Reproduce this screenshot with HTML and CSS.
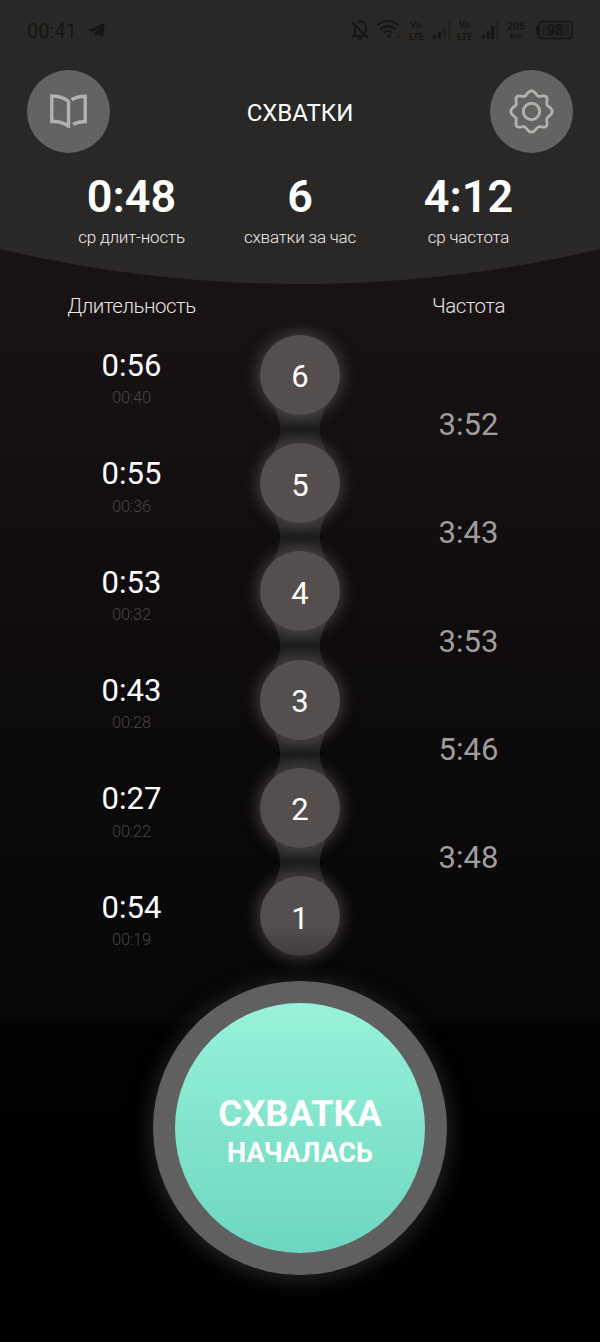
FILE: index.html
```html
<!DOCTYPE html>
<html lang="ru">
<head>
<meta charset="utf-8">
<title>Схватки</title>
<link rel="stylesheet" href="styles.css">
</head>
<body>
<main class="screen">
  <header class="top">
    <div class="status">
      <span class="clock">00:41</span>
      <svg class="plane" width="18" height="16" viewBox="0 0 18 16"><path d="M.5 8 17 .5 15 15 9.500 12.500 7.500 14.500 7 10.500 13 4.500 5 9.800Z" fill="currentColor"/></svg>
      <svg class="status-icons" width="222" height="24" viewBox="0 0 222 24">
        <g fill="none" stroke="currentColor" stroke-width="1.800">
          <path d="M1 4 17.500 20.500M5 7.500C3.500 10 4 13 4 15.500L2 18H15M6.500 4.800C11 1.800 15 5 15 9.500V14.500M9.500 2V4M7 20.500H11"/>
          <path d="M26 7.500Q37-1.500 48 7.500M29.500 11.300Q37 5 44.500 11.300M33 14.800Q37 11.300 41 14.800" stroke-width="2"/>
          <rect x="188" y="3.500" width="33" height="17" rx="3" stroke-width="1.600"/>
        </g>
        <g fill="currentColor">
          <circle cx="37.500" cy="18" r="1.800"/><circle cx="47" cy="19" r="1"/>
          <path d="M82 17h3v4h-3zM87 14h3v7h-3zM131 17h3v4h-3zM135.500 13h3v8h-3zM140 8h3v13h-3zM185 8h2v8h-2z"/>
          <path class="dim" d="M92 8h3v13h-3zM97 4h3v17h-3zM145 4h3v17h-3zM191 6h27v12h-27z"/>
          <g class="tiny" text-anchor="middle">
            <text x="65" y="10">Vo</text><text x="65.500" y="21.500">LTE</text>
            <text x="113.500" y="10">Vo</text><text x="114" y="21.500">LTE</text>
            <text class="rate" x="165" y="11.500">205</text><text class="unit" x="165" y="21">B/S</text>
            <text class="charge" x="204" y="17">98</text>
          </g>
        </g>
      </svg>
    </div>
    <div class="bar">
      <button class="round" aria-label="Справка">
        <svg width="38" height="34" viewBox="0 0 38 34" fill="none" stroke="currentColor" stroke-width="3.400"><path d="M1.800 2V27.500Q11.500 27 18.500 32V7.500Q12 2 1.800 2ZM21.500 5.800Q27 2.500 35.200 2.200V27.500Q29 27.500 23 30.300"/></svg>
      </button>
      <h1 class="title">СХВАТКИ</h1>
      <button class="round" aria-label="Настройки">
        <svg width="46" height="46" viewBox="-23.500 -23.500 46 46" fill="none" stroke="currentColor" stroke-width="2.800" stroke-linejoin="round"><circle r="8.200" stroke-width="3"/><path d="M0-20.700C4-20.700 4.500-16 7-15.300C9.500-14.500 12.500-17 14.700-14.700C17-12.500 14.500-9.500 15.300-7C16-4.500 20.700-4 20.700 0C20.700 4 16 4.500 15.300 7C14.500 9.500 17 12.500 14.700 14.700C12.500 17 9.500 14.500 7 15.300C4.500 16 4 20.700 0 20.700C-4 20.700-4.500 16-7 15.300C-9.500 14.500-12.500 17-14.700 14.700C-17 12.500-14.500 9.500-15.300 7C-16 4.500-20.700 4-20.700 0C-20.700-4-16-4.500-15.300-7C-14.500-9.500-17-12.500-14.700-14.700C-12.500-17-9.500-14.500-7-15.300C-4.500-16-4-20.700 0-20.700Z"/></svg>
      </button>
    </div>
    <div class="stats">
      <div class="stat"><b class="value">0:48</b><span class="caption">ср длит-ность</span></div>
      <div class="stat"><b class="value">6</b><span class="caption">схватки за час</span></div>
      <div class="stat"><b class="value">4:12</b><span class="caption">ср частота</span></div>
    </div>
  </header>
  <div class="heads"><span>Длительность</span><span></span><span>Частота</span></div>
  <section class="log">
    <div class="durations">
      <div class="entry"><span class="time">0:56</span><span class="at">00:40</span></div>
      <div class="entry"><span class="time">0:55</span><span class="at">00:36</span></div>
      <div class="entry"><span class="time">0:53</span><span class="at">00:32</span></div>
      <div class="entry"><span class="time">0:43</span><span class="at">00:28</span></div>
      <div class="entry"><span class="time">0:27</span><span class="at">00:22</span></div>
      <div class="entry"><span class="time">0:54</span><span class="at">00:19</span></div>
    </div>
    <div class="chain">
      <div class="node"><span class="number">6</span></div><i class="link"></i>
      <div class="node"><span class="number">5</span></div><i class="link"></i>
      <div class="node"><span class="number">4</span></div><i class="link"></i>
      <div class="node"><span class="number">3</span></div><i class="link"></i>
      <div class="node"><span class="number">2</span></div><i class="link"></i>
      <div class="node last"><span class="number">1</span></div>
    </div>
    <div class="intervals">
      <span class="gap">3:52</span><span class="gap">3:43</span><span class="gap">3:53</span><span class="gap">5:46</span><span class="gap">3:48</span>
    </div>
  </section>
  <div class="ring"><button class="start"><span class="big">СХВАТКА</span><span class="small">НАЧАЛАСЬ</span></button></div>
</main>
</body>
</html>
```
FILE: styles.css
```css
* { box-sizing: border-box; }
body { margin: 0; background: #000; font-family: Roboto, sans-serif; color: #fff; }
button { border: 0; padding: 0; font: inherit; color: inherit; }
.screen {
  display: flex; flex-direction: column; align-items: center;
  width: 600px; height: 1342px; overflow: hidden;
  background: linear-gradient(#1a1315 240px, #171113 350px, #0b090a 780px, #080708 1020px, #020202 1024px, #000 1200px);
}
.top {
  width: 100%; height: 284px; background: #292827;
  clip-path: circle(1303px at 50% -1019px);
}
.status { display: flex; align-items: center; height: 60px; padding: 0 27px; color: #151513; }
.clock { font-size: 20px; width: 61px; padding-top: 1px; }
.status-icons { margin-left: auto; }
.dim { opacity: .35; }
.tiny { font-size: 9.500px; font-weight: 600; }
.rate { font-size: 10.500px; }
.unit { font-size: 7.500px; }
.charge { font-size: 14px; }
.bar { display: flex; align-items: center; justify-content: space-between; height: 84px; margin-top: 9px; padding: 0 27px; }
.round { display: flex; align-items: center; justify-content: center; width: 83px; height: 83px; border-radius: 50%; background: #646361; color: #b2b1af; }
.title { margin: 3px 0 0; font-size: 24px; font-weight: 400; line-height: 28px; }
.stats, .heads, .log { display: grid; grid-template-columns: repeat(3, 168.500px); justify-content: center; }
.stats { margin-top: 18px; text-align: center; }
.stat { display: flex; flex-direction: column; }
.value { font-size: 45px; font-weight: 600; line-height: 52px; }
.caption { font-size: 17px; font-weight: 300; letter-spacing: -.2px; line-height: 20px; margin-top: 4px; color: #eee; }
.heads { height: 36.800px; padding-top: 9px; font-size: 20.500px; font-weight: 300; letter-spacing: -.5px; line-height: 26px; text-align: center; color: #e6e4e4; }
.log { height: 650px; }
.entry { display: flex; flex-direction: column; align-items: center; height: 108.300px; padding-top: 26.300px; }
.time { font-size: 31px; line-height: 37px; }
.at { font-size: 16.500px; font-weight: 300; letter-spacing: -.2px; line-height: 20px; margin-top: 4.400px; color: #484445; }
.chain { display: flex; flex-direction: column; align-items: center; padding-top: 14px; }
.node {
  display: flex; align-items: center; justify-content: center; flex: none;
  position: relative; z-index: 1;
  width: 80px; height: 80px; padding-top: 4px; border-radius: 50%;
  background: #554e4e; font-size: 31px;
  box-shadow: 0 0 14px 3px #554e4fb0;
}
.node.last { background: linear-gradient(#554e4e 60%, #423c3d); }
.link {
  flex: none; width: 56px; height: 52.300px; margin: -12px 0;
  background: linear-gradient(#2a2a2a, #2a2a2a 28%, #1b1b1b 50%, #242323 70%, #292727);
  clip-path: path("M0 0C5 10 8 17 8 27C8 35 5 42 0 52.300H56C51 42 48 35 48 27C48 17 51 10 56 0Z");
}
.intervals { display: flex; flex-direction: column; padding-top: 50.300px; text-align: center; }
.gap { height: 108.300px; padding-top: 35px; font-size: 31px; line-height: 37px; color: #a09c9d; }
.ring {
  display: flex; flex: none; align-items: center; justify-content: center;
  width: 294px; height: 294px; margin-top: 10px; border-radius: 50%;
  background: #606060; box-shadow: 0 3px 22px 1px #282828;
}
.start {
  display: flex; flex-direction: column; align-items: center;
  width: 250px; height: 250px; padding-top: 89px; border-radius: 50%;
  background: linear-gradient(#98f2d9, #6dd6c0);
  font-weight: 700;
}
.big { font-size: 36.500px; line-height: 43px; }
.small { font-size: 27px; line-height: 32px; margin-top: 2px; }
```
